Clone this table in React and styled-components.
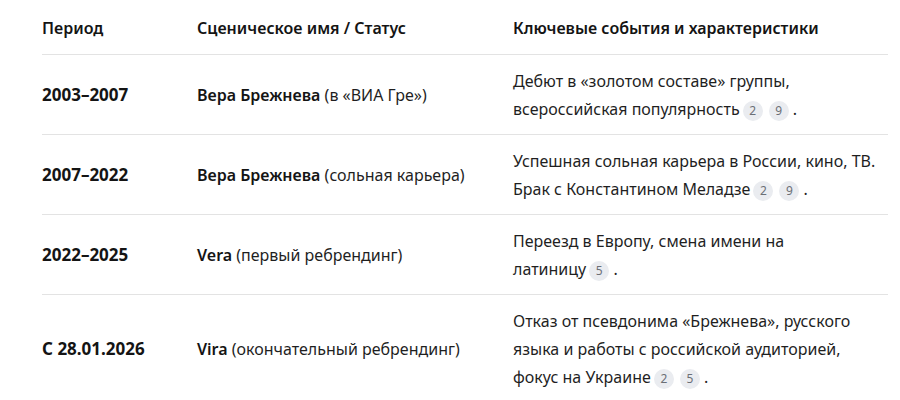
import React from 'react';
import styled, {createGlobalStyle} from 'styled-components';

const rows = [
  {
    period: '2003–2007',
    name: 'Вера Брежнева',
    note: '(в «ВИА Гре»)',
    text: 'Дебют в «золотом составе» группы, всероссийская',
    last: 'популярность',
    refs: [2, 9],
  },
  {
    period: '2007–2022',
    name: 'Вера Брежнева',
    note: '(сольная карьера)',
    text: 'Успешная сольная карьера в России, кино, ТВ. Брак с Константином',
    last: 'Меладзе',
    refs: [2, 9],
  },
  {
    period: '2022–2025',
    name: 'Vera',
    note: '(первый ребрендинг)',
    text: 'Переезд в Европу, смена имени на',
    last: 'латиницу',
    refs: [5],
  },
  {
    period: 'С 28.01.2026',
    name: 'Vira',
    note: '(окончательный ребрендинг)',
    text: 'Отказ от псевдонима «Брежнева», русского языка и работы с российской аудиторией, фокус на',
    last: 'Украине',
    refs: [2, 5],
  },
];

const App = () => {
  return (
    <>
      <GlobalStyle />
      <Wrapper>
        <Table>
          <colgroup>
            <col style={{width: 155}} />
            <col style={{width: 316}} />
            <col style={{width: 375}} />
          </colgroup>
          <thead>
            <tr>
              <Th>Период</Th>
              <Th>Сценическое имя / Статус</Th>
              <Th>Ключевые события и характеристики</Th>
            </tr>
          </thead>
          <tbody>
            {rows.map((row, index) => {
              return (
                <tr key={index}>
                  <Td>
                    <Period>{row.period}</Period>
                  </Td>
                  <Td>
                    <strong>{row.name}</strong> {row.note}
                  </Td>
                  <Td>
                    {row.text}{' '}
                    <Tail>
                      {row.last}
                      {row.refs.map((ref, i) => (
                        <Ref key={i}>{ref}</Ref>
                      ))}{' '}
                      .
                    </Tail>
                  </Td>
                </tr>
              );
            })}
          </tbody>
        </Table>
      </Wrapper>
    </>
  );
};

const GlobalStyle = createGlobalStyle`
  body {
    margin: 0;
    background: #fff;
    font-family: "Noto Sans", "Open Sans", sans-serif;
    color: #1f1f1f;
  }
`;

const Wrapper = styled.div`
  padding: 14px 12px 0 42px;
`;

const Table = styled.table`
  width: 846px;
  table-layout: fixed;
  border-collapse: collapse;
  font-size: 16px;
  line-height: 28px;
  tr {
    border-bottom: 1px solid #e3e3e3;
  }
  strong {
    font-weight: 600;
    color: #141414;
  }
`;

const Th = styled.th`
  text-align: left;
  font-weight: 600;
  color: #141414;
  padding: 0 12px 12px 0;
  vertical-align: top;
`;

const Td = styled.td`
  padding: 11.5px 12px 11.5px 0;
  vertical-align: middle;
`;

const Period = styled.span`
  font-size: 17px;
  font-weight: 700;
  color: #141414;
`;

const Tail = styled.span`
  white-space: nowrap;
`;

const Ref = styled.span`
  display: inline-flex;
  align-items: center;
  justify-content: center;
  min-width: 20px;
  height: 20px;
  margin-left: 3px;
  padding: 0 2px;
  box-sizing: border-box;
  border-radius: 10px;
  background: #eaecf0;
  color: #6b6f76;
  font-size: 12px;
  line-height: 1;
  vertical-align: 0;
  & + & {
    margin-left: 6px;
  }
`;

export default App;
